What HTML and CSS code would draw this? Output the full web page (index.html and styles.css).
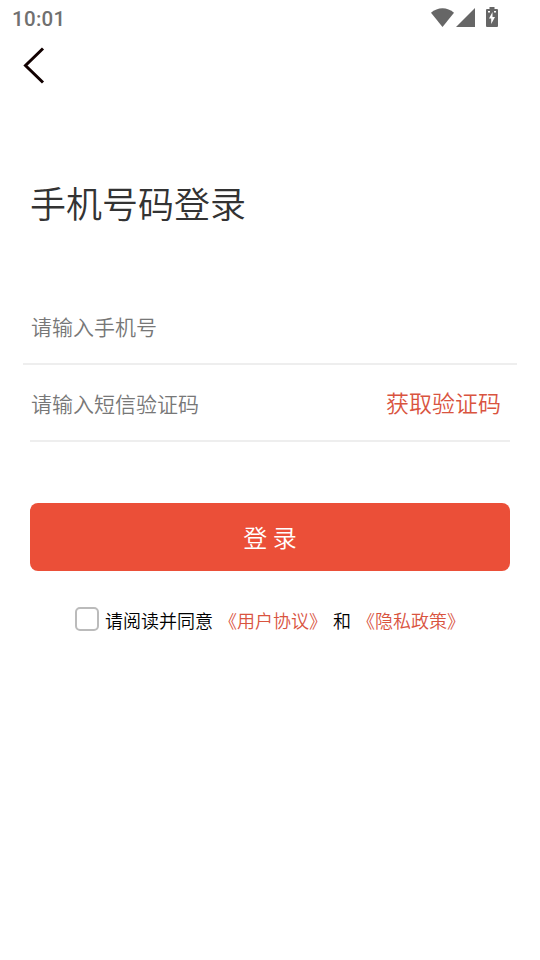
FILE: index.html
```html
<!DOCTYPE html>
<html lang="zh-CN">
<head>
<meta charset="utf-8">
<title>手机号码登录</title>
<link rel="stylesheet" href="styles.css">
</head>
<body>
<header class="status">
  <span class="time">10:01</span>
  <span class="icons">
    <svg class="wifi" width="24" height="20" viewBox="0 0 24 20"><path d="M11.500 19 0 4.800C6.500-1.200 16.500-1.200 23 4.800Z"/></svg>
    <svg class="signal" width="20" height="20" viewBox="0 0 20 20"><path d="M0 19 19 0V19Z"/></svg>
    <svg class="battery" width="12" height="20" viewBox="0 0 12 20"><path fill-rule="evenodd" d="M3.500 0h5v2H11q1 0 1 1v16q0 1-1 1H1q-1 0-1-1V3q0-1 1-1h2.500ZM2 4v1.500h2V4ZM8 4v1.500h2V4ZM6.500 5 3 11.500H5.200V17l3.800-7H6.500Z"/></svg>
  </span>
</header>
<nav class="nav">
  <svg width="24" height="40" viewBox="0 0 24 40"><path d="M21 2.500 3.500 19.500 21 36.500"/></svg>
</nav>
<main class="main">
  <h1 class="title">手机号码登录</h1>
  <div class="field field-phone">请输入手机号</div>
  <div class="field field-code"><span>请输入短信验证码</span><a class="get-code">获取验证码</a></div>
  <button class="login">登 录</button>
  <div class="agree">
    <span class="check"></span>
    <span class="agree-text">请阅读并同意</span>
    <a class="terms">《用户协议》</a>
    <span class="and">和</span>
    <a class="privacy">《隐私政策》</a>
  </div>
</main>
</body>
</html>
```

FILE: styles.css
```css
* { box-sizing: border-box; }
body {
  margin: 0;
  height: 960px;
  background: #fff;
  font-family: "Noto Sans CJK SC", sans-serif;
  font-weight: 350;
  overflow: hidden;
}
.status {
  height: 36px;
  padding: 0 42px 0 12px;
  display: flex;
  justify-content: space-between;
  align-items: center;
}
.time { font: 500 20.5px/36px Roboto, sans-serif; letter-spacing: 0.3px; color: #707070; padding-top: 2px; }
.icons { display: flex; align-items: center; fill: #666; }
.signal { margin: 0 10px 0 1px; }
.battery { margin-top: -2px; }
.nav { height: 60px; padding: 10px 0 0 22px; }
.nav svg { display: block; fill: none; stroke: #100; stroke-width: 3; }
.main { padding: 0 30px; }
.title {
  margin: 76px 0 0;
  height: 60px;
  font-weight: 350;
  font-size: 36px;
  line-height: 60px;
  color: #333;
}
.field {
  display: flex;
  justify-content: space-between;
  align-items: center;
  border-bottom: 2px solid #eee;
  font-size: 21px;
  color: #777;
}
.field-phone { margin: 57px -7px 0; height: 76px; padding: 0 8px; }
.field-code { height: 77px; padding: 0 9px 0 1px; }
.get-code { font-size: 23px; color: #d9543f; padding-bottom: 2px; }
.login {
  display: block;
  width: 100%;
  height: 68px;
  margin: 61px 0 0;
  border: 0;
  border-radius: 8px;
  background: #eb4f38;
  color: #fff;
  font: 350 24px/68px "Noto Sans CJK SC", sans-serif;
  padding: 0;
}
.agree {
  display: flex;
  align-items: center;
  height: 30px;
  margin-top: 34px;
  padding-left: 45px;
  font-size: 18px;
  white-space: nowrap;
  color: #000;
}
.check {
  width: 24px;
  height: 24px;
  margin: -2px 6px 0 0;
  border: 2px solid #bbb;
  border-radius: 5px;
}
.terms, .privacy { color: #d9543f; }
.terms { margin-left: 6px; }
.and { margin: 0 6px; }
```
